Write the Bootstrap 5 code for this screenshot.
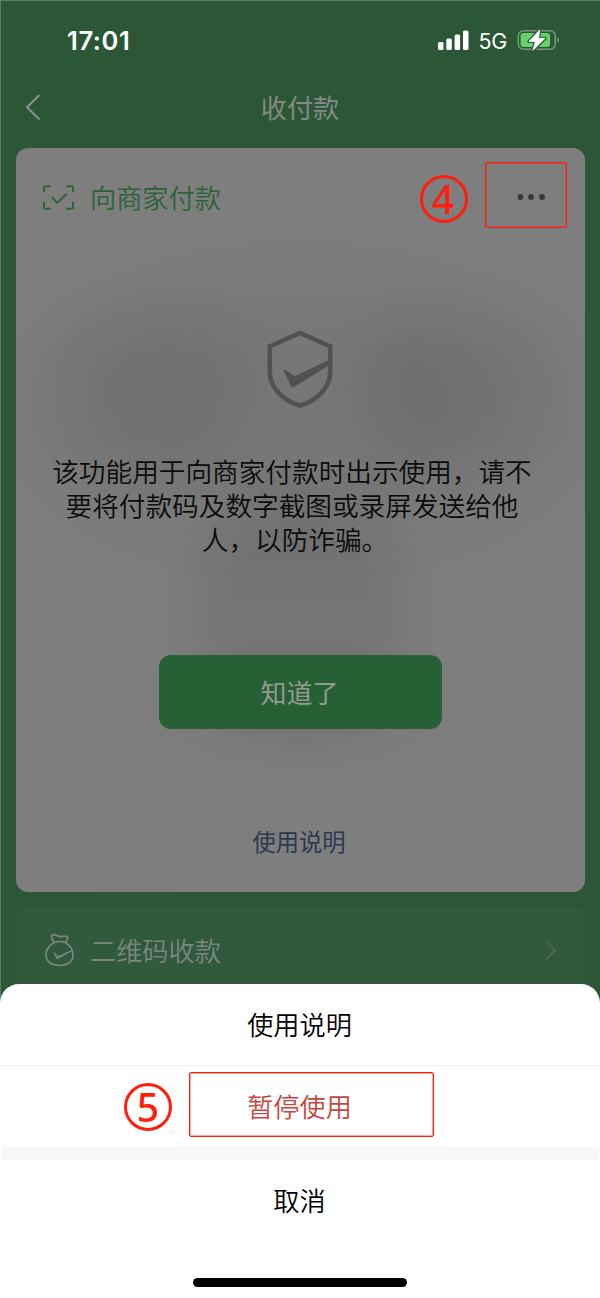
<!DOCTYPE html>
<html lang="zh-CN">
<head>
<meta charset="utf-8">
<meta name="viewport" content="width=device-width, initial-scale=1">
<title>收付款</title>
<link rel="stylesheet" href="https://cdn.jsdelivr.net/npm/bootstrap@5.3.0/dist/css/bootstrap.min.css">
<style>
body{background:#2b5737;color:#0b0b0b;font-size:26.2px;line-height:36px}
.zh{font-family:"Noto Sans CJK SC",sans-serif}
.phone{width:600px;height:1298px;background:#2b5737;box-shadow:inset 1px 1px 0 #5a7d64}
.status{height:80px;padding:0 40px 0 67px}
.clock{font:600 25.5px/30px Inter,sans-serif;letter-spacing:.6px;color:#fff;padding-top:1px}
.net{font:400 21.5px/30px Inter,sans-serif;letter-spacing:-.3px;margin:2px 10px 0 9px}
.titlebar{height:68px;padding:0 25px 15px;color:#848984}
.pay{width:569px;height:744px;margin-left:16px;border:0;border-radius:12px;background:
 radial-gradient(ellipse 70px 85px at 405px 242px,rgba(0,0,0,.025),transparent),
 radial-gradient(ellipse 150px 125px at 130px 242px,rgba(0,0,0,.055) 30%,transparent),
 radial-gradient(ellipse 150px 125px at 440px 242px,rgba(0,0,0,.055) 30%,transparent),
 radial-gradient(ellipse 350px 200px at 284px 265px,rgba(0,0,0,.06) 35%,transparent),
 radial-gradient(ellipse 145px 150px at 284px 465px,rgba(0,0,0,.07) 50%,transparent),
 radial-gradient(ellipse 180px 75px at 284px 560px,rgba(0,0,0,.06),transparent),
 radial-gradient(ellipse 90px 80px at 120px 690px,rgba(0,0,0,.012) 50%,transparent),
 #7e7e7e}
.pay-head{height:98px;padding:0 0 0 26px;color:#2b6336;gap:15px}
.dots{margin-left:auto;margin-right:39px}
.shield{margin:83px 2px 0 0}
.notice{width:520px;margin:47px 0 0 16px;font-size:26.65px;line-height:34px;font-family:"Liberation Sans","Noto Sans CJK SC",sans-serif}
.tail{padding-left:6px}
.ok{width:283px;height:74px;margin-top:97px;border:0;border-radius:12px;background:#276035;color:#929b92;font-size:26px;padding:0 2px 2px 0}
.ok:hover{background:#276035;color:#929b92}
.help{font-size:23.3px;color:#303750;margin:94px 3px 0 0;text-decoration:none}
.receive{width:569px;height:92px;margin:15px 0 0 16px;border-radius:12px 12px 0 0;background:#31593d;color:#7b887e;padding:0 28px 7px 28px;gap:15px}
.sheet{height:314px;top:984px;background:#fff;border-radius:19px 19px 0 0}
.sheet-item{height:82px;border:0;background:none;font-size:26.2px;padding:0 1px 2px 0}
.stop-item{height:81px;color:#c6463e}
.line{border-bottom:1px solid #eee}
.band{height:13px;background:#f7f7f7;margin:0 1px 0 2px}
.homebar{width:214px;height:9px;border-radius:5px;background:#000;margin-top:36px}
.zh,.sheet-item{font-weight:350}
.titlebar,.ok,.help{font-weight:400}
.frame{border:1px solid #ff1d0d;border-radius:2px;box-shadow:inset 0 0 0 1px rgba(255,29,13,.4)}
.frame-more{left:485px;top:162px;width:82px;height:66px}
.frame-stop{left:189px;top:1072px;width:245px;height:65px}
.step{width:48px;height:48px;border:3px solid #ff1d0d;border-radius:50%;color:#ff1d0d;font:500 39px/41px "Noto Sans",sans-serif}
.step-a{left:420px;top:174.500px;padding-right:2px}
.step-b{left:124px;top:1083px}
</style>
</head>
<body class="m-0 overflow-hidden">
<main class="phone position-relative overflow-hidden zh">
  <header class="status d-flex align-items-center">
    <span class="clock me-auto">17:01</span>
    <svg width="31" height="20" fill="#fff"><rect x="0" y="12" width="5.5" height="8" rx="1.5"/><rect x="8.3" y="8.500" width="5.500" height="11.500" rx="1.500"/><rect x="16.600" y="4.500" width="5.500" height="15.500" rx="1.500"/><rect x="25" y=".5" width="5.500" height="19.500" rx="1.500"/></svg>
    <span class="net text-white">5G</span>
    <svg width="43" height="24" viewBox="0 0 43 24"><rect x="1.300" y="2.700" width="37" height="18.600" rx="5.500" fill="none" stroke="#78957f" stroke-width="1.500"/><rect x="3.600" y="5" width="29.500" height="14" rx="3.300" fill="#65d267"/><path d="M40.300 9.200c2.200.8 2.200 4.600 0 5.400z" fill="#78957f"/><path d="M22.800 1.800 12 13.500h6.300L16 22.300 28 10.300h-6.500z" fill="#fff" stroke="#2b5737" stroke-width="3.200" stroke-linejoin="round"/><path d="M22.800 1.800 12 13.500h6.300L16 22.300 28 10.300h-6.500z" fill="#fff" stroke="#fff" stroke-width=".8" stroke-linejoin="round"/></svg>
  </header>
  <nav class="titlebar d-flex align-items-center">
    <svg width="16" height="26" viewBox="0 0 16 26" fill="none" stroke="#8b918c" stroke-width="2"><path d="M14.500 1 2 13.300 14.500 25.500"/></svg>
    <span class="flex-fill text-center pe-3">收付款</span>
  </nav>
  <section class="card pay align-items-center">
    <div class="pay-head d-flex align-items-center w-100">
      <svg width="33" height="27" viewBox="0 0 34 27" fill="none" stroke="#2b6336" stroke-width="2"><path d="M2 8V3.500Q2 2 3.500 2H9M25 2h5.500Q32 2 32 3.500V8M2 18v5.500Q2 25 3.500 25H9M25 25h5.500Q32 25 32 23.500V18M10 13l6 6L25.500 9.500"/></svg>
      <span>向商家付款</span>
      <svg class="dots" width="30" height="8" fill="#393939"><circle cx="4.500" cy="4" r="2.900"/><circle cx="15" cy="4" r="2.900"/><circle cx="26" cy="4" r="2.900"/></svg>
    </div>
    <svg class="shield flex-shrink-0" width="68" height="80" viewBox="0 0 68 80"><path d="M34 4 64.200 17.500V43C64.200 59 50 72 34 76.500 18 72 3.800 59 3.800 43V17.500Z" fill="none" stroke="#515151" stroke-width="4.600"/><path d="M18 42.500c-1.200-2 .5-2.700 1.800-1.600l7.400 5.400q1.500 1 3.500 0L65 30v5L28 58q-2 1.400-3-.8z" fill="#515151"/></svg>
    <p class="notice text-center align-self-start">该功能用于向商家付款时出示使用，请不<br>要将付款码及数字截图或录屏发送给他<br><span class="tail">人，以防诈骗。</span></p>
    <button class="btn ok">知道了</button>
    <a class="help" href="#">使用说明</a>
  </section>
  <section class="receive d-flex align-items-center">
    <svg width="31" height="34" viewBox="0 0 31 34" fill="none" stroke="#7b887e" stroke-width="1.700"><path d="M10 9.500C4 13 2 18 2 22c0 7 6 10.500 13.500 10.500S29 29 29 22c0-5-3-9.500-7.500-12.500M10 9.500C8.500 7 7 5 7.500 3c1-2 3.500-1.500 5-.7 2 1 3 1.800 5 1.200s4-.9 5.500.2c2 1.500-.5 3.500-1.500 5.800Q16 7.500 10 9.500Z"/><path d="m10 19.500 4 4L28 17.500l-15 8.500z" fill="#7b887e" stroke-width="1"/></svg>
    <span>二维码收款</span>
    <svg class="ms-auto" width="14" height="22" viewBox="0 0 14 22" fill="none" stroke="#4c6c55" stroke-width="1.800"><path d="m3 2 9 9.500-9 9"/></svg>
  </section>
  <section class="sheet position-absolute start-0 w-100 d-flex flex-column">
    <button class="sheet-item line">使用说明</button>
    <button class="sheet-item stop-item">暂停使用</button>
    <div class="band"></div>
    <button class="sheet-item text-black">取消</button>
    <div class="homebar mx-auto"></div>
  </section>
  <div class="step step-a position-absolute text-center">4</div>
  <div class="frame frame-more position-absolute"></div>
  <div class="step step-b position-absolute text-center">5</div>
  <div class="frame frame-stop position-absolute"></div>
</main>
<script src="https://cdn.jsdelivr.net/npm/bootstrap@5.3.0/dist/js/bootstrap.bundle.min.js"></script>
</body>
</html>
